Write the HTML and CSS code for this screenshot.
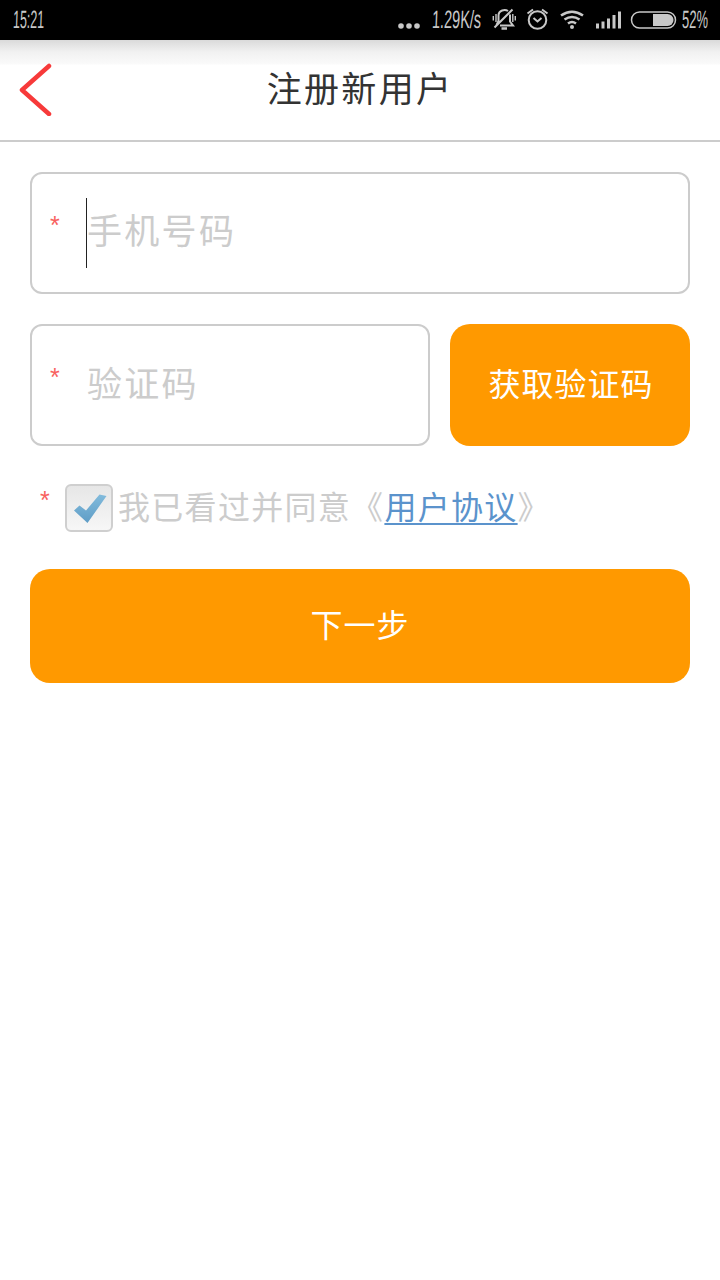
FILE: index.html
```html
<!DOCTYPE html>
<html lang="zh-CN">
<head>
<meta charset="utf-8">
<title>注册新用户</title>
<link rel="stylesheet" href="styles.css">
</head>
<body>
<div class="status">
  <div class="clock"><span class="narrow">15:21</span></div>
  <svg class="dots" width="24" height="40" viewBox="0 0 24 40" fill="#c8c8c8"><circle cx="4" cy="26" r="2.8"/><circle cx="12" cy="26" r="2.8"/><circle cx="20" cy="26" r="2.8"/></svg>
  <div class="speed"><span class="narrow">1.29K/s</span></div>
  <svg class="icons" width="190" height="40" viewBox="490 0 190 40" fill="none" stroke="#c8c8c8" stroke-width="2">
    <path d="M500 25.500H513L510 21.500V14.500M496.500 25L498.500 21V15.500C498.500 10 505 9 508 11M494.500 27.500L512.500 9.500"/>
    <path d="M501.500 28.500H507" stroke-width="2.500"/>
    <path d="M496 14V22M493.300 16V20.500M512.800 14V22M515.300 16V20.500" stroke-width="1.400"/>
    <circle cx="537.500" cy="20" r="8.800"/>
    <path d="M533.500 18L537.500 21.500L541.500 18M527.500 13.500L533 9.500M542 9.500L547.500 13.500" stroke-width="2"/>
    <path d="M561 15.500Q572 8 583 15.500M564.500 19.500Q572 14.500 579.500 19.500M568 23.500Q572 20.500 576 23.500" stroke-width="2.600"/>
    <circle cx="572" cy="27" r="2" fill="#c8c8c8" stroke="none"/>
    <path d="M597.500 28.500V23.500M603 28.500V21.500M608.500 28.500V18.500M614 28.500V15M619.500 28.500V11.500" stroke-width="3"/>
    <rect x="631.500" y="12" width="44" height="16" rx="8" stroke-width="1.500"/>
    <path d="M653 14H667.500A6 6 0 0 1 667.500 26H653Z" fill="#c8c8c8" stroke="none"/>
  </svg>
  <div class="percent"><span class="narrow">52%</span></div>
</div>
<header class="header">
  <svg class="back" width="34" height="54" viewBox="0 0 34 54" fill="none" stroke="#f73a3a" stroke-width="4.500" stroke-linecap="round" stroke-linejoin="round"><path d="M31 4L4 28L31 52"/></svg>
  <h1 class="title">注册新用户</h1>
</header>
<main class="form">
  <div class="field phone"><span class="star">*</span><span class="caret"></span><span class="hint">手机号码</span></div>
  <div class="row">
    <div class="field code"><span class="star">*</span><span class="hint">验证码</span></div>
    <div class="button get">获取验证码</div>
  </div>
  <div class="terms">
    <span class="star">*</span>
    <svg class="check" width="48" height="48" viewBox="0 0 48 48">
      <defs>
        <linearGradient id="box" x1="0" y1="0" x2="0" y2="1"><stop offset="0" stop-color="#e6e6e6"/><stop offset="1" stop-color="#f7f7f7"/></linearGradient>
        <linearGradient id="tick" x1="0" y1="0" x2="0" y2="1"><stop offset="0" stop-color="#82bbdc"/><stop offset="1" stop-color="#5f9dc6"/></linearGradient>
      </defs>
      <rect x="1" y="1" width="46" height="46" rx="5" fill="url(#box)" stroke="#cfcfcf" stroke-width="2"/>
      <path d="M9 26.500L14.500 21.500L21 26.500L34.500 10.500L41.500 12L22.500 39Z" fill="url(#tick)"/>
    </svg>
    <span class="agree">我已看过并同意《<a class="link">用户协议</a>》</span>
  </div>
  <div class="button next">下一步</div>
</main>
</body>
</html>
```

FILE: styles.css
```css
body {
  margin: 0;
  background: #fff;
  font-family: "Noto Sans CJK SC", sans-serif;
  font-weight: 400;
}
.status {
  display: flex;
  height: 40px;
  background: #000;
  color: #c8c8c8;
  font: 25px/39px "Liberation Sans", sans-serif;
}
.clock { width: 384px; padding-left: 13px; }
.dots { flex: none; margin: 0 11px 0 0; }
.speed { width: 58px; }
.icons { flex: none; }
.percent { width: 38px; padding-left: 2px; }
.narrow {
  display: inline-block;
  white-space: nowrap;
  transform-origin: 0 50%;
  transform: scaleX(.5) skewX(-4deg);
}
.speed .narrow { transform: scaleX(.58) skewX(-4deg); }
.percent .narrow { transform: scaleX(.52) skewX(-4deg); }
.header {
  display: flex;
  align-items: center;
  box-sizing: border-box;
  height: 102px;
  padding: 0 52px 2px 18px;
  border-bottom: 2px solid #ccc;
  background: linear-gradient(#dadada, #f1f1f1 12px, #fafafa 24px, #fff 25px);
}
.title {
  flex: 1;
  margin: 0;
  padding-bottom: 5px;
  color: #333;
  font-size: 35px;
  font-weight: 400;
  line-height: 50px;
  letter-spacing: 2.3px;
  text-align: center;
}
.form { padding: 30px; }
.field {
  display: flex;
  align-items: center;
  box-sizing: border-box;
  height: 122px;
  padding-left: 18px;
  border: 2px solid #ccc;
  border-radius: 12px;
}
.star {
  flex: none;
  width: 10px;
  padding-bottom: 17px;
  color: #f8625f;
  font: 25px/40px "Liberation Sans", sans-serif;
}
.caret {
  width: 1px;
  height: 70px;
  margin-left: 26px;
  background: #222;
}
.hint {
  padding-bottom: 8px;
  color: #ccc;
  font-size: 35px;
  line-height: 50px;
  letter-spacing: 2.3px;
}
.code { width: 400px; }
.code .hint { margin-left: 27px; padding-bottom: 7px; }
.row {
  display: flex;
  justify-content: space-between;
  margin-top: 30px;
}
.button {
  border-radius: 20px;
  background: #f90;
  color: #fff;
  font-size: 32px;
  letter-spacing: 1px;
  text-align: center;
}
.get { box-sizing: border-box; width: 240px; height: 122px; padding-left: 2px; line-height: 117px; }
.terms {
  display: flex;
  align-items: center;
  height: 48px;
  margin: 38px 0 37px;
  padding-left: 10px;
}
.check { flex: none; margin: 0 5px 0 15px; }
.agree {
  color: #ccc;
  font-size: 32px;
  line-height: 46px;
  letter-spacing: 1.3px;
  white-space: nowrap;
  padding-bottom: 7px;
}
.link {
  color: #5b93cc;
  text-decoration: underline;
  text-decoration-thickness: 2px;
  text-underline-offset: 4px;
}
.next { height: 114px; line-height: 109px; }
```
